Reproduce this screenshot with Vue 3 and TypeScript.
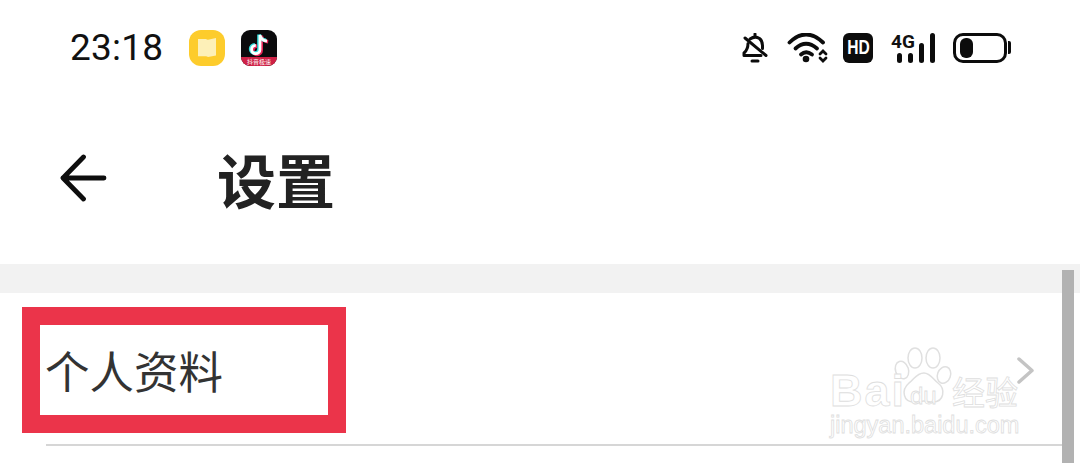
<script setup lang="ts">
const title = '设置'
const rowLabel = '个人资料'
</script>

<template>
  <div class="page">
    <div class="status-bar">
      <span class="time">23:18</span>
      <div class="app-icons">
        <svg class="app" width="36" height="36" viewBox="0 0 36 36">
          <rect width="36" height="36" rx="12" fill="#fdcc2c" />
          <path d="M9 9h8q1 1 2 .8l8-1.800v17.500l-8 1.500q-1-.8-2-.8H9z" fill="#fdf0b8" />
        </svg>
        <div class="tiktok">
          <svg width="36" height="36" viewBox="0 0 36 36">
            <rect width="36" height="36" rx="9" fill="#0b0b0d" />
            <path d="M19 5v14.500a4.200 4.200 0 1 1-4.200-4.200M19 5q1 5.500 7 6" fill="none" stroke="#e8275a" stroke-width="3.600" transform="translate(1.200 .8)" />
            <path d="M19 5v14.500a4.200 4.200 0 1 1-4.200-4.200M19 5q1 5.500 7 6" fill="none" stroke="#36dcdc" stroke-width="3.600" transform="translate(-1 -.6)" />
            <path d="M19 5v14.500a4.200 4.200 0 1 1-4.200-4.200M19 5q1 5.500 7 6" fill="none" stroke="#fff" stroke-width="2.800" />
          </svg>
          <span class="tiktok-tag">抖音极速</span>
        </div>
      </div>
      <div class="sys-icons">
        <svg width="26" height="30" viewBox="0 0 26 30" fill="none" stroke="#0c0c0c" stroke-width="3" stroke-linecap="round" stroke-linejoin="round">
          <path d="M3 5l21 17.500" />
          <path d="M8 6q5-3.500 9.500-.5 3 2.500 3 7v3" />
          <path d="M6 10.500q0 6-4 9.500v2.500h17" />
          <path d="M13 1v2M10 28h6" />
        </svg>
        <svg class="wifi" width="42" height="30" viewBox="0 0 42 30" fill="none" stroke="#0c0c0c" stroke-width="3.800" stroke-linecap="round">
          <path d="M2.500 9.500q16.500-16 33.500 0" />
          <path d="M8.500 15.500q10.500-9.500 21.500 0" />
          <path d="M14 21.500q5-4.500 11 0" />
          <circle cx="19" cy="26" r="3.300" fill="#0c0c0c" stroke="none" />
          <path d="M33 21l3-3 3 3M33 25l3 3 3-3" stroke-width="2.800" />
        </svg>
        <div class="hd"><span class="hd-text">HD</span></div>
        <div class="signal">
          <span class="net">4G</span>
          <div class="bars">
            <i class="bar b1"></i>
            <i class="bar b2"></i>
            <i class="bar b3"></i>
            <i class="bar b4"></i>
          </div>
        </div>
        <div class="battery">
          <div class="cell"><i class="level"></i></div>
          <i class="cap"></i>
        </div>
      </div>
    </div>

    <header class="nav">
      <svg class="back" width="47" height="48" viewBox="0 0 47 48" fill="none" stroke="#0e0e0e" stroke-width="4.800" stroke-linecap="round" stroke-linejoin="round">
        <path d="M23.500 3L3 24l20.500 21M3 24h41" />
      </svg>
      <h1 class="title">{{ title }}</h1>
    </header>

    <div class="band"></div>

    <div class="row">
      <span class="row-label">{{ rowLabel }}</span>
      <svg class="chevron" width="17" height="27" viewBox="0 0 17 27" fill="none" stroke="#c4c4c4" stroke-width="3.500" stroke-linecap="round" stroke-linejoin="round">
        <path d="M2 2l13 11.500L2 25" />
      </svg>
      <div class="highlight"></div>
      <div class="watermark">
        <svg class="paw" width="66" height="66" viewBox="0 0 66 66" fill="#fff" stroke="#e0e0e0" stroke-width="1.500">
          <ellipse cx="9" cy="23" rx="6.500" ry="9" transform="rotate(-18 9 23)" />
          <ellipse cx="22" cy="11" rx="7" ry="10" />
          <ellipse cx="40" cy="11" rx="7" ry="10" />
          <ellipse cx="51" cy="28" rx="6.500" ry="8.500" transform="rotate(20 51 28)" />
          <path d="M31 26c6 0 9 6 14 10 8 6 6 19-5 19-4 0-6-1-9-1s-6 1-10 1c-11 0-13-12-5-19 5-3 7-10 15-10z" />
        </svg>
        <span class="wm wm-bai">Bai</span>
        <span class="wm wm-du">du</span>
        <span class="wm wm-cn">经验</span>
        <span class="wm wm-url">jingyan.baidu.com</span>
      </div>
    </div>
    <div class="divider"></div>

    <div class="scrollbar"></div>
  </div>
</template>

<style>
html, body { margin: 0; background: #fff; }
</style>

<style scoped>
.page {
  position: relative; width: 1080px; height: 463px; overflow: hidden; background: #fff;
  font-family: "Noto Sans CJK SC", "Liberation Sans", sans-serif;
}
.status-bar { display: flex; align-items: center; height: 95px; padding: 0 69px 0 70px; box-sizing: border-box; }
.time { font-family: Roboto, sans-serif; font-size: 37px; color: #111; width: 119px; letter-spacing: 0.2px; }
.app-icons { display: flex; gap: 16px; }
.app { display: block; }
.tiktok { position: relative; width: 36px; height: 36px; }
.tiktok svg { display: block; }
.tiktok-tag {
  position: absolute; left: 0; right: 0; bottom: 0; height: 9px; background: #cf2146; border-radius: 0 0 9px 9px;
  color: #fff; font-size: 6px; line-height: 9px; text-align: center; white-space: nowrap; overflow: hidden;
}
.sys-icons { display: flex; align-items: center; margin-left: auto; height: 30px; }
.wifi { margin-left: 19px; }
.hd {
  display: flex; align-items: center; justify-content: center; width: 30px; height: 30px; margin-left: 14px;
  border-radius: 6px; background: #0c0c0c; color: #fff;
  font-family: "Liberation Sans", sans-serif; font-size: 20px; font-weight: 700;
}
.hd-text { display: block; transform: scaleX(0.78); }
.signal { position: relative; width: 44px; height: 30px; margin-left: 18px; }
.net {
  position: absolute; left: 0; top: 0; font-family: Roboto, sans-serif; font-size: 19px; font-weight: 700;
  line-height: 18px; color: #111;
}
.bars { display: flex; align-items: flex-end; gap: 5.500px; height: 100%; padding-left: 6px; box-sizing: border-box; }
.bar { display: block; width: 5.500px; border-radius: 2.500px; background: #0c0c0c; }
.b1 { height: 10px; }
.b2 { height: 10px; }
.b3 { height: 20px; }
.b4 { height: 30px; }
.battery { display: flex; align-items: center; gap: 1px; margin-left: 18px; }
.cell {
  width: 54px; height: 30px; box-sizing: border-box; border: 3px solid #0c0c0c; border-radius: 10px; padding: 2px 4px;
}
.level { display: block; width: 13px; height: 100%; background: #0c0c0c; border-radius: 6px; }
.cap { display: block; width: 3px; height: 13px; background: #0c0c0c; border-radius: 0 2px 2px 0; }

.nav { display: flex; align-items: center; height: 169px; padding: 0 0 3px 60px; box-sizing: border-box; }
.back { display: block; }
.title { margin: 0 0 0 110px; font-size: 59px; line-height: 1; font-weight: 700; color: #222; }

.band { height: 29px; background: #f2f2f2; }
.row {
  position: relative; display: flex; align-items: center; justify-content: space-between; height: 151px;
  padding: 3px 46px 0 45px; box-sizing: border-box;
}
.row-label { font-size: 44.500px; line-height: 1; color: #333; }
.chevron { position: relative; }
.highlight {
  position: absolute; left: 22px; top: 14px; width: 324px; height: 126px; box-sizing: border-box;
  border: 18px solid #eb344a;
}
.watermark { position: absolute; left: 828px; top: 46px; width: 200px; height: 100px; }
.paw { position: absolute; left: 65px; top: 8px; }
.wm {
  position: absolute; line-height: 1; white-space: nowrap; color: #fff; -webkit-text-stroke: 0.8px #dedede;
  font-family: "Liberation Sans", sans-serif;
}
.wm-bai { left: 2px; top: 29px; font-size: 45px; font-weight: 700; letter-spacing: 2px; }
.wm-du { left: 82px; top: 45px; font-size: 24px; }
.wm-cn { left: 124px; top: 36px; font-size: 33px; font-family: "Noto Sans CJK SC", sans-serif; }
.wm-url { left: 2px; top: 75px; font-size: 23.500px; }
.divider { height: 2px; margin: 0 18px 0 46px; background: #d6d6d6; }
.scrollbar { position: absolute; left: 1062px; top: 270px; bottom: 0; width: 12px; background: #b2b2b2; }
</style>
